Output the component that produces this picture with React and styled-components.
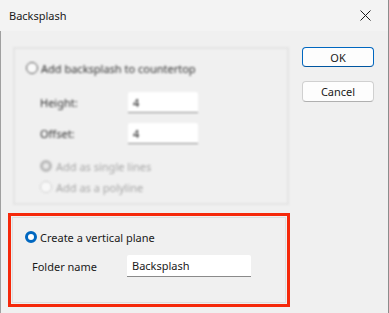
import React from 'react';
import styled, { createGlobalStyle, css } from 'styled-components';

const Global = createGlobalStyle`
  body {
    margin: 0;
    padding: 0;
    background: #f0f0f0;
    font-family: "Segoe UI", "Noto Sans", sans-serif;
    font-size: 11px;
    color: #1a1a1a;
  }
`;

const Window = styled.div`
  width: 389px;
  height: 313px;
  box-sizing: border-box;
  display: flex;
  flex-direction: column;
  background: #f0f0f0;
  border-right: 1px solid #8c8c8c;
  overflow: hidden;
`;

const TitleBar = styled.div`
  height: 31px;
  flex-shrink: 0;
  display: flex;
  align-items: center;
  padding: 0 0 0 9px;
  background: #f3f3f3;
`;

const Title = styled.span`
  flex: 1;
  font-size: 11px;
  color: #1a1a1a;
`;

const CloseBox = styled.div`
  width: 46px;
  height: 31px;
  display: flex;
  align-items: center;
  justify-content: center;
`;

const Body = styled.div`
  flex: 1;
  display: flex;
  padding: 16px 14px 0 12px;
  border-left: 1px solid #a0a0a0;
`;

const LeftCol = styled.div`
  width: 276px;
  display: flex;
  flex-direction: column;
`;

const GroupBox = styled.div`
  box-sizing: border-box;
  border: 1px solid #dedede;
  display: flex;
  flex-direction: column;
  ${p => p.disabled && css`
    height: 158px;
    padding: 12px 0 0 11px;
    filter: blur(1px);
    border-width: 2px;
    border-color: #e4e4e4;
  `}
  ${p => !p.disabled && css`
    height: 86px;
    padding: 12px 0 0 12px;
  `}
`;

const Highlight = styled.div`
  margin-top: 8px;
  margin-left: -5px;
  width: 282px;
  box-sizing: border-box;
  border: 3px solid #f5280a;
  padding: 1px;
`;

const RadioRow = styled.label`
  display: flex;
  align-items: center;
  height: 14px;
  gap: ${p => (p.indent ? 4 : 3)}px;
  margin-left: ${p => (p.indent ? 14 : 0)}px;
  margin-top: ${p => p.top || 0}px;
  color: ${p => (p.muted ? '#a6a6a6' : p.soft ? '#333' : '#1a1a1a')};
`;

const Radio = styled.span`
  width: 12px;
  height: 12px;
  box-sizing: border-box;
  border-radius: 50%;
  flex-shrink: 0;
  ${p => p.checked && css`
    border: 3.5px solid #0067c0;
    background: #fff;
  `}
  ${p => p.off && css`
    border: 1px solid #5a5a5a;
    background: #fafafa;
  `}
  ${p => p.dim && css`
    border: 3px solid #b9b9b9;
    background: #e8e8e8;
  `}
  ${p => p.faint && css`
    border: 1px solid #d0d0d0;
    background: #f8f8f8;
  `}
`;

const FieldRow = styled.div`
  display: flex;
  align-items: center;
  margin-top: ${p => p.top}px;
  padding-left: ${p => p.pad}px;
`;

const Label = styled.span`
  width: ${p => p.w}px;
  color: ${p => (p.dark ? '#1a1a1a' : '#333')};
`;

const TextBox = styled.div`
  width: ${p => p.w}px;
  height: ${p => p.h}px;
  box-sizing: border-box;
  background: #fff;
  border-bottom: 1px solid #8a8a8a;
  border-radius: 2px 2px 0 0;
  padding-left: 5px;
  display: flex;
  align-items: center;
  color: #1a1a1a;
`;

const ButtonCol = styled.div`
  margin-left: auto;
  display: flex;
  flex-direction: column;
  gap: 14px;
`;

const Button = styled.button`
  width: 72px;
  height: ${p => (p.primary ? 20 : 21)}px;
  box-sizing: border-box;
  font: inherit;
  font-size: 11px;
  color: #1a1a1a;
  background: #fdfdfd;
  border-radius: 4px;
  padding: 0;
  border: 1px solid ${p => (p.primary ? '#0067c0' : '#d0d0d0')};
  border-bottom-color: ${p => (p.primary ? '#0055a0' : '#b0b0b0')};
`;

const CloseIcon = () => (
  <svg width="11" height="11" viewBox="0 0 11 11">
    <path d="M0.5 0.5 L10.5 10.5 M10.5 0.5 L0.5 10.5" stroke="#1a1a1a" strokeWidth="1" fill="none" />
  </svg>
);

export default function App() {
  return (
    <>
      <Global />
      <Window>
        <TitleBar>
          <Title>Backsplash</Title>
          <CloseBox><CloseIcon /></CloseBox>
        </TitleBar>
        <Body>
          <LeftCol>
            <GroupBox disabled>
              <RadioRow soft>
                <Radio off />
                <span>Add backsplash to countertop</span>
              </RadioRow>
              <FieldRow top={17} pad={14}>
                <Label w={88}>Height:</Label>
                <TextBox w={70} h={21}>4</TextBox>
              </FieldRow>
              <FieldRow top={10} pad={14}>
                <Label w={88}>Offset:</Label>
                <TextBox w={70} h={21}>4</TextBox>
              </FieldRow>
              <RadioRow indent muted top={15}>
                <Radio dim />
                <span>Add as single lines</span>
              </RadioRow>
              <RadioRow indent muted top={7}>
                <Radio faint />
                <span>Add as a polyline</span>
              </RadioRow>
            </GroupBox>
            <Highlight>
              <GroupBox>
                <RadioRow>
                  <Radio checked />
                  <span>Create a vertical plane</span>
                </RadioRow>
                <FieldRow top={11} pad={7}>
                  <Label w={95} dark>Folder name</Label>
                  <TextBox w={124} h={22}>Backsplash</TextBox>
                </FieldRow>
              </GroupBox>
            </Highlight>
          </LeftCol>
          <ButtonCol>
            <Button primary>OK</Button>
            <Button>Cancel</Button>
          </ButtonCol>
        </Body>
      </Window>
    </>
  );
}
